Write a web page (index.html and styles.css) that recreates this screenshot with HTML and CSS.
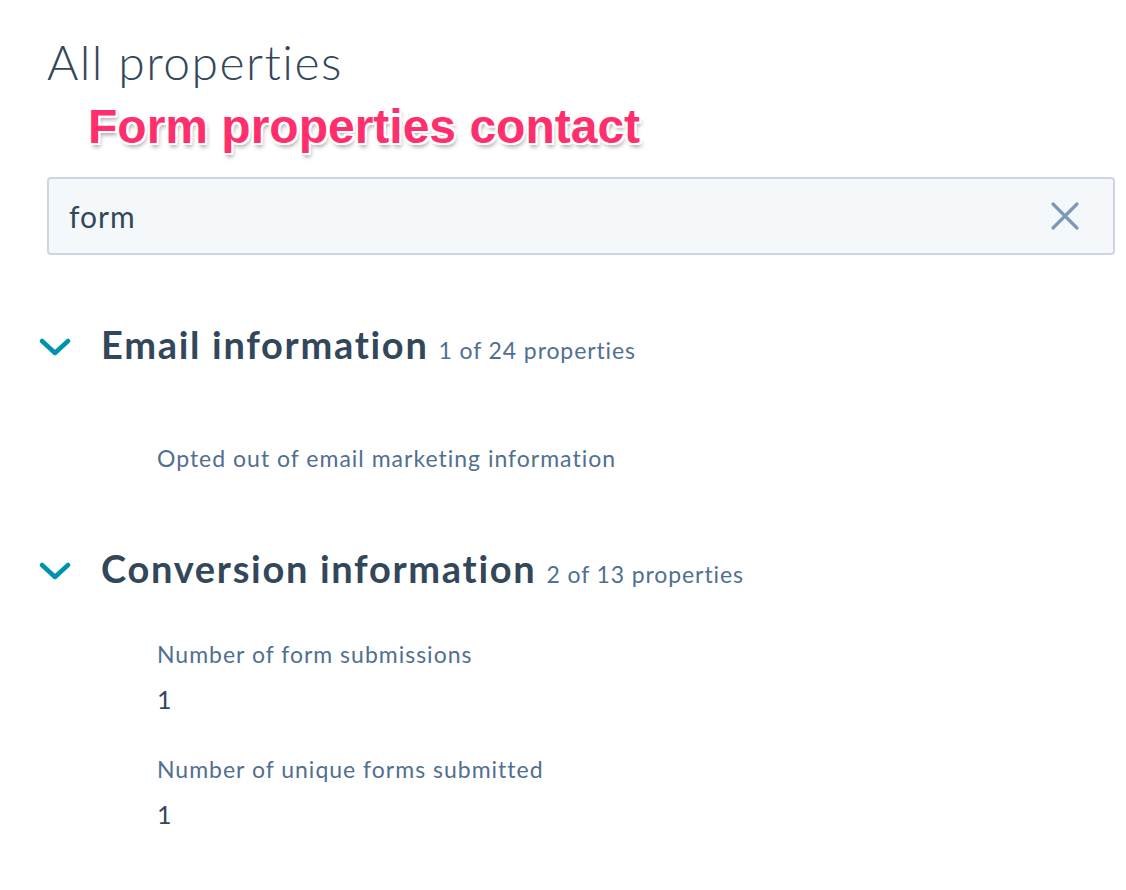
FILE: index.html
```html
<!DOCTYPE html>
<html>
<head>
<meta charset="utf-8">
<link rel="stylesheet" href="styles.css">
</head>
<body>
<div class="page">
  <h1 class="title">All properties</h1>
  <div class="annotation">Form properties contact</div>
  <div class="search">
    <span class="search-text">form</span>
    <svg class="clear" width="30" height="30" viewBox="0 0 30 30"><path d="M3 3 L27 27 M27 3 L3 27" stroke="#7c98b6" stroke-width="3.2" stroke-linecap="round" fill="none"/></svg>
  </div>

  <section class="group group-email">
    <div class="group-head">
      <svg class="chev" width="32" height="20" viewBox="0 0 32 20"><path d="M3 4 L16 16 L29 4" stroke="#0091ae" stroke-width="4.5" stroke-linecap="round" stroke-linejoin="round" fill="none"/></svg>
      <span class="group-name">Email information</span>
      <span class="group-count">1 of 24 properties</span>
    </div>
    <div class="props">
      <div class="prop"><div class="prop-label">Opted out of email marketing information</div></div>
    </div>
  </section>

  <section class="group group-conv">
    <div class="group-head">
      <svg class="chev" width="32" height="20" viewBox="0 0 32 20"><path d="M3 4 L16 16 L29 4" stroke="#0091ae" stroke-width="4.5" stroke-linecap="round" stroke-linejoin="round" fill="none"/></svg>
      <span class="group-name">Conversion information</span>
      <span class="group-count">2 of 13 properties</span>
    </div>
    <div class="props">
      <div class="prop"><div class="prop-label">Number of form submissions</div><div class="prop-value">1</div></div>
      <div class="prop"><div class="prop-label">Number of unique forms submitted</div><div class="prop-value">1</div></div>
    </div>
  </section>
</div>
</body>
</html>
```
FILE: styles.css
```css
html, body {
  margin: 0;
  padding: 0;
  background: #ffffff;
}
body {
  font-family: Lato, "Open Sans", sans-serif;
  font-variant-ligatures: none;
  color: #33475b;
}
.page {
  padding: 30px 11px 0 47px;
}
.title {
  margin: 0;
  font-weight: 300;
  font-size: 48px;
  line-height: 64px;
  letter-spacing: 1.45px;
  color: #33475b;
}
.annotation {
  margin: 3px 0 0 41px;
  font-family: "Liberation Sans", Arial, sans-serif;
  font-weight: 700;
  font-size: 48px;
  line-height: 60px;
  color: #ff2f6d;
  text-shadow:
    2px 0 0 #fff, -2px 0 0 #fff, 0 2px 0 #fff, 0 -2px 0 #fff,
    2px 2px 0 #fff, -2px -2px 0 #fff, 2px -2px 0 #fff, -2px 2px 0 #fff,
    2px 4px 4px rgba(0,0,0,0.35);
}
.search {
  margin-top: 20px;
  height: 78px;
  box-sizing: border-box;
  border: 2px solid #cbd6e2;
  border-radius: 4px;
  background: #f5f8fa;
  display: flex;
  align-items: center;
  justify-content: space-between;
  padding: 0 33px 0 20px;
}
.search-text {
  font-size: 30px;
  letter-spacing: 1px;
  color: #33475b;
}
.group-head {
  display: flex;
  align-items: baseline;
  margin-left: -8px;
  line-height: 50px;
}
.group-email {
  margin-top: 64px;
}
.group-conv {
  margin-top: 70px;
}
.chev {
  flex: none;
  align-self: center;
  margin-right: 30px;
}
.group-name {
  font-weight: 700;
  font-size: 38px;
  letter-spacing: 1.7px;
  color: #33475b;
}
.group-count {
  margin-left: 10px;
  font-size: 23px;
  letter-spacing: 0.9px;
  color: #516f90;
}
.group-email .props {
  padding-top: 68px;
}
.group-conv .props {
  padding-top: 40px;
}
.props {
  padding-left: 110px;
}
.prop + .prop {
  margin-top: 40px;
}
.prop-label {
  font-size: 23px;
  line-height: 30px;
  letter-spacing: 1px;
  color: #516f90;
}
.prop-value {
  font-size: 25px;
  line-height: 30px;
  margin-top: 15px;
  color: #33475b;
}
```
